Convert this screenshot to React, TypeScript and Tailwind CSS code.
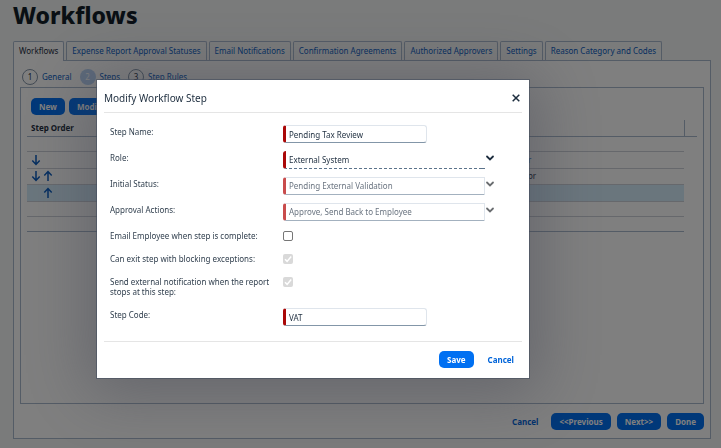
import { type ReactNode } from "react";

const TABS = [
  "Workflows",
  "Expense Report Approval Statuses",
  "Email Notifications",
  "Confirmation Agreements",
  "Authorized Approvers",
  "Settings",
  "Reason Category and Codes",
];

const STEPS = ["General", "Steps", "Step Rules"];

const TABLE_ROWS = [
  { down: false, up: false, text: "", link: false, height: "h-[15px]" },
  { down: true, up: false, text: "r", link: true, height: "h-[17px]" },
  { down: true, up: true, text: "or", link: false, height: "h-4" },
  { down: false, up: true, text: "", link: false, height: "h-[17px]", selected: true },
  { down: false, up: false, text: "", link: false, height: "h-[15px]" },
  { down: false, up: false, text: "", link: false, height: "h-[15px]", last: true },
];

function Arrow({ up = false }: { up?: boolean }) {
  return (
    <svg
      viewBox="0 0 10 12"
      className={up ? "h-3 w-[10px] rotate-180" : "h-3 w-[10px]"}
      fill="none"
      stroke="#0a5cc0"
      strokeWidth="1.5"
    >
      <path d="M5 1v9.5M1.3 6.6 5 10.4l3.7-3.8" />
    </svg>
  );
}

function Chevron({ muted = false }: { muted?: boolean }) {
  return (
    <svg
      viewBox="0 0 10 8"
      className="mt-1 h-2 w-[10px]"
      fill="none"
      stroke={muted ? "#6a6d70" : "#1d2d3e"}
      strokeWidth="1.8"
      strokeLinecap="round"
    >
      <path d="M2 1.5 5 4.5 8 1.5" />
    </svg>
  );
}

function Button({ children }: { children: ReactNode }) {
  return (
    <button type="button" className="h-[17px] rounded-[5px] bg-[#0070f2] px-2 text-[8px] leading-[17px] font-bold text-white">
      {children}
    </button>
  );
}

function Row({ id, label, height, children }: { id: string; label: string; height: string; children: ReactNode }) {
  return (
    <div className={`flex items-start ${height}`}>
      <label htmlFor={id} className="mt-[2px] w-[173px] shrink-0 pr-2 text-[8px] leading-[10px] text-[#32404f]">
        {label}
      </label>
      {children}
    </div>
  );
}

function TextField({ id, value }: { id: string; value: string }) {
  return (
    <input
      id={id}
      type="text"
      defaultValue={value}
      className="h-[18px] w-36 rounded-[3px] border border-l-[3px] border-[#dfe5ec] border-b-[#8396a8] border-l-[#aa0808] pl-[3px] text-[8px] text-[#1d2d3e]"
    />
  );
}

function SelectField({ id, value, disabled = false }: { id: string; value: string; disabled?: boolean }) {
  return (
    <>
      <select
        id={id}
        disabled={disabled}
        className={
          disabled
            ? "h-[18px] w-[202px] appearance-none rounded-l-[3px] border border-l-[3px] border-[#dfe5ec] border-b-[#a3b1bf] border-l-[#c94c4c] pl-[3px] text-[8px] text-[#6a7480]"
            : "h-[18px] w-[202px] appearance-none rounded-l-[3px] border-b border-l-[3px] border-dashed border-b-[#5b738b] border-l-[#aa0808] pl-[3px] text-[8px] text-[#1d2d3e] [border-left-style:solid]"
        }
      >
        <option>{value}</option>
      </select>
      <Chevron muted={disabled} />
    </>
  );
}

function CheckField({ id, checked = false }: { id: string; checked?: boolean }) {
  return (
    <span className="mt-[2px] grid h-[10px] w-[10px]">
      <input
        id={id}
        type="checkbox"
        defaultChecked={checked}
        disabled={checked}
        className={
          checked
            ? "col-start-1 row-start-1 h-[10px] w-[10px] appearance-none rounded-[2px] bg-[#d9d9d9]"
            : "col-start-1 row-start-1 h-[10px] w-[10px] appearance-none rounded-[2px] border border-[#767676] bg-white"
        }
      />
      {checked && (
        <svg viewBox="0 0 10 10" className="pointer-events-none col-start-1 row-start-1" fill="none" stroke="#fff" strokeWidth="1.5">
          <path d="M2 5.3 4.1 7.4 8.2 2.6" />
        </svg>
      )}
    </span>
  );
}

function StepTable() {
  return (
    <table className="w-full table-fixed border-collapse text-left text-[8px] leading-3">
      <colgroup>
        <col />
        <col className="w-[156px]" />
        <col className="w-[13px]" />
      </colgroup>
      <thead>
        <tr className="h-4 border-b border-[#a8b8cc]">
          <th className="pl-1 font-bold text-[#1d2d3e]">Step Order</th>
          <th className="border-r border-[#a8b8cc]" />
          <th />
        </tr>
      </thead>
      <tbody>
        {TABLE_ROWS.map((row, index) => {
          const line = row.last ? "border-b border-[#a8b8cc]" : "border-b border-[#ccd0d8]";
          const fill = row.selected ? "bg-[#d5ecfb]" : "";
          return (
            <tr key={index} className={row.height}>
              <td className={`p-0 ${line} ${fill}`}>
                <div className="grid h-3 w-7 grid-cols-2 pl-1">
                  <span>{row.down && <Arrow />}</span>
                  <span>{row.up && <Arrow up />}</span>
                </div>
              </td>
              <td className={`p-0 ${line} ${fill} ${row.link ? "text-[#0a5cc0]" : "text-[#1d2d3e]"}`}>{row.text}</td>
              <td className="p-0" />
            </tr>
          );
        })}
      </tbody>
    </table>
  );
}

function WorkflowsPage() {
  return (
    <div className="flex min-h-screen flex-col pr-[10px] pb-[9px] pl-[13px]">
      <h1 className="h-[41px] pt-px text-[23px] leading-7 font-extrabold text-[#131e29]">Workflows</h1>
      <nav className="flex gap-[2px]">
        {TABS.map((tab, index) => (
          <a
            key={tab}
            href="#"
            className={
              index === 0
                ? "z-10 -mb-px h-[20px] rounded-t-[2px] border border-b-0 border-[#a8b8cc] bg-white px-[5px] text-[8px] leading-[18px] whitespace-nowrap text-[#1d2d3e]"
                : "h-[19px] rounded-t-[2px] border border-b-0 border-[#a8b8cc] px-[5px] text-[8px] leading-[18px] whitespace-nowrap text-[#0a5cc0]"
            }
          >
            {tab}
          </a>
        ))}
      </nav>
      <main className="flex grow flex-col border border-[#a8b8cc] bg-white px-[6px] pt-2">
        <ol className="flex h-[18px] gap-2 pl-[2px]">
          {STEPS.map((step, index) => (
            <li key={step} className="flex h-4 items-center gap-1">
              <span
                className={
                  index === 1
                    ? "flex h-4 w-4 items-center justify-center rounded-full bg-[#b9d3f5] text-[8px] text-white"
                    : "flex h-4 w-4 items-center justify-center rounded-full border border-[#8696a9] text-[8px] text-[#1d2d3e]"
                }
              >
                {index + 1}
              </span>
              <a href="#" className="text-[8px] text-[#0a5cc0]">
                {step}
              </a>
            </li>
          ))}
        </ol>
        <section className="grow border border-[#a8b8cc] px-[6px] pt-[10px]">
          <div className="mb-[5px] flex gap-1 pl-1">
            <Button>New</Button>
            <Button>Modify</Button>
          </div>
          <StepTable />
        </section>
        <footer className="flex items-center justify-end gap-[6px] pt-[9px] pb-2">
          <button type="button" className="mr-[7px] text-[8px] font-bold text-[#0064d9]">
            Cancel
          </button>
          <Button>&lt;&lt;Previous</Button>
          <Button>Next&gt;&gt;</Button>
          <Button>Done</Button>
        </footer>
      </main>
    </div>
  );
}

function StepDialog() {
  return (
    <div
      role="dialog"
      aria-labelledby="dialog-title"
      className="w-full max-w-[432px] self-start bg-white px-[7px] shadow-[0_6px_60px_10px_rgba(60,62,78,0.4),0_0_0_1px_rgba(70,82,98,0.6)]"
    >
      <header className="flex h-[33px] items-center justify-between border-b border-[#e5e5e5] pt-1 pr-[2px]">
        <h2 id="dialog-title" className="text-[10px] text-[#1d2d3e]">
          Modify Workflow Step
        </h2>
        <button type="button" aria-label="Close" className="p-0">
          <svg viewBox="0 0 8 8" className="h-2 w-2" fill="none" stroke="#1d2d3e" strokeWidth="1.5">
            <path d="m.7.7 6.6 6.6M7.3.7.7 7.3" />
          </svg>
        </button>
      </header>
      <form className="px-[6px] pt-3">
        <Row id="name" label="Step Name:" height="h-[26px]">
          <TextField id="name" value="Pending Tax Review" />
        </Row>
        <Row id="role" label="Role:" height="h-[26px]">
          <SelectField id="role" value="External System" />
        </Row>
        <Row id="status" label="Initial Status:" height="h-[26px]">
          <SelectField id="status" value="Pending External Validation" disabled />
        </Row>
        <Row id="actions" label="Approval Actions:" height="h-[26px]">
          <SelectField id="actions" value="Approve, Send Back to Employee" disabled />
        </Row>
        <Row id="email" label="Email Employee when step is complete:" height="h-[23px]">
          <CheckField id="email" />
        </Row>
        <Row id="exit" label="Can exit step with blocking exceptions:" height="h-[23px]">
          <CheckField id="exit" checked />
        </Row>
        <Row id="notify" label="Send external notification when the report stops at this step:" height="h-[33px]">
          <CheckField id="notify" checked />
        </Row>
        <Row id="code" label="Step Code:" height="h-[33px]">
          <TextField id="code" value="VAT" />
        </Row>
      </form>
      <footer className="flex justify-end gap-[14px] border-t border-[#e5e5e5] pt-[9px] pr-2 pb-[10px]">
        <Button>Save</Button>
        <button type="button" className="text-[8px] font-bold text-[#0064d9]">
          Cancel
        </button>
      </footer>
    </div>
  );
}

export default function App() {
  return (
    <div className="bg-[#f5f6f6] font-['Noto_Sans','Open_Sans',sans-serif]">
      <WorkflowsPage />
      <div className="fixed inset-0 z-20 flex bg-black/50 pt-20 pr-4 pl-[97px]">
        <StepDialog />
      </div>
    </div>
  );
}
